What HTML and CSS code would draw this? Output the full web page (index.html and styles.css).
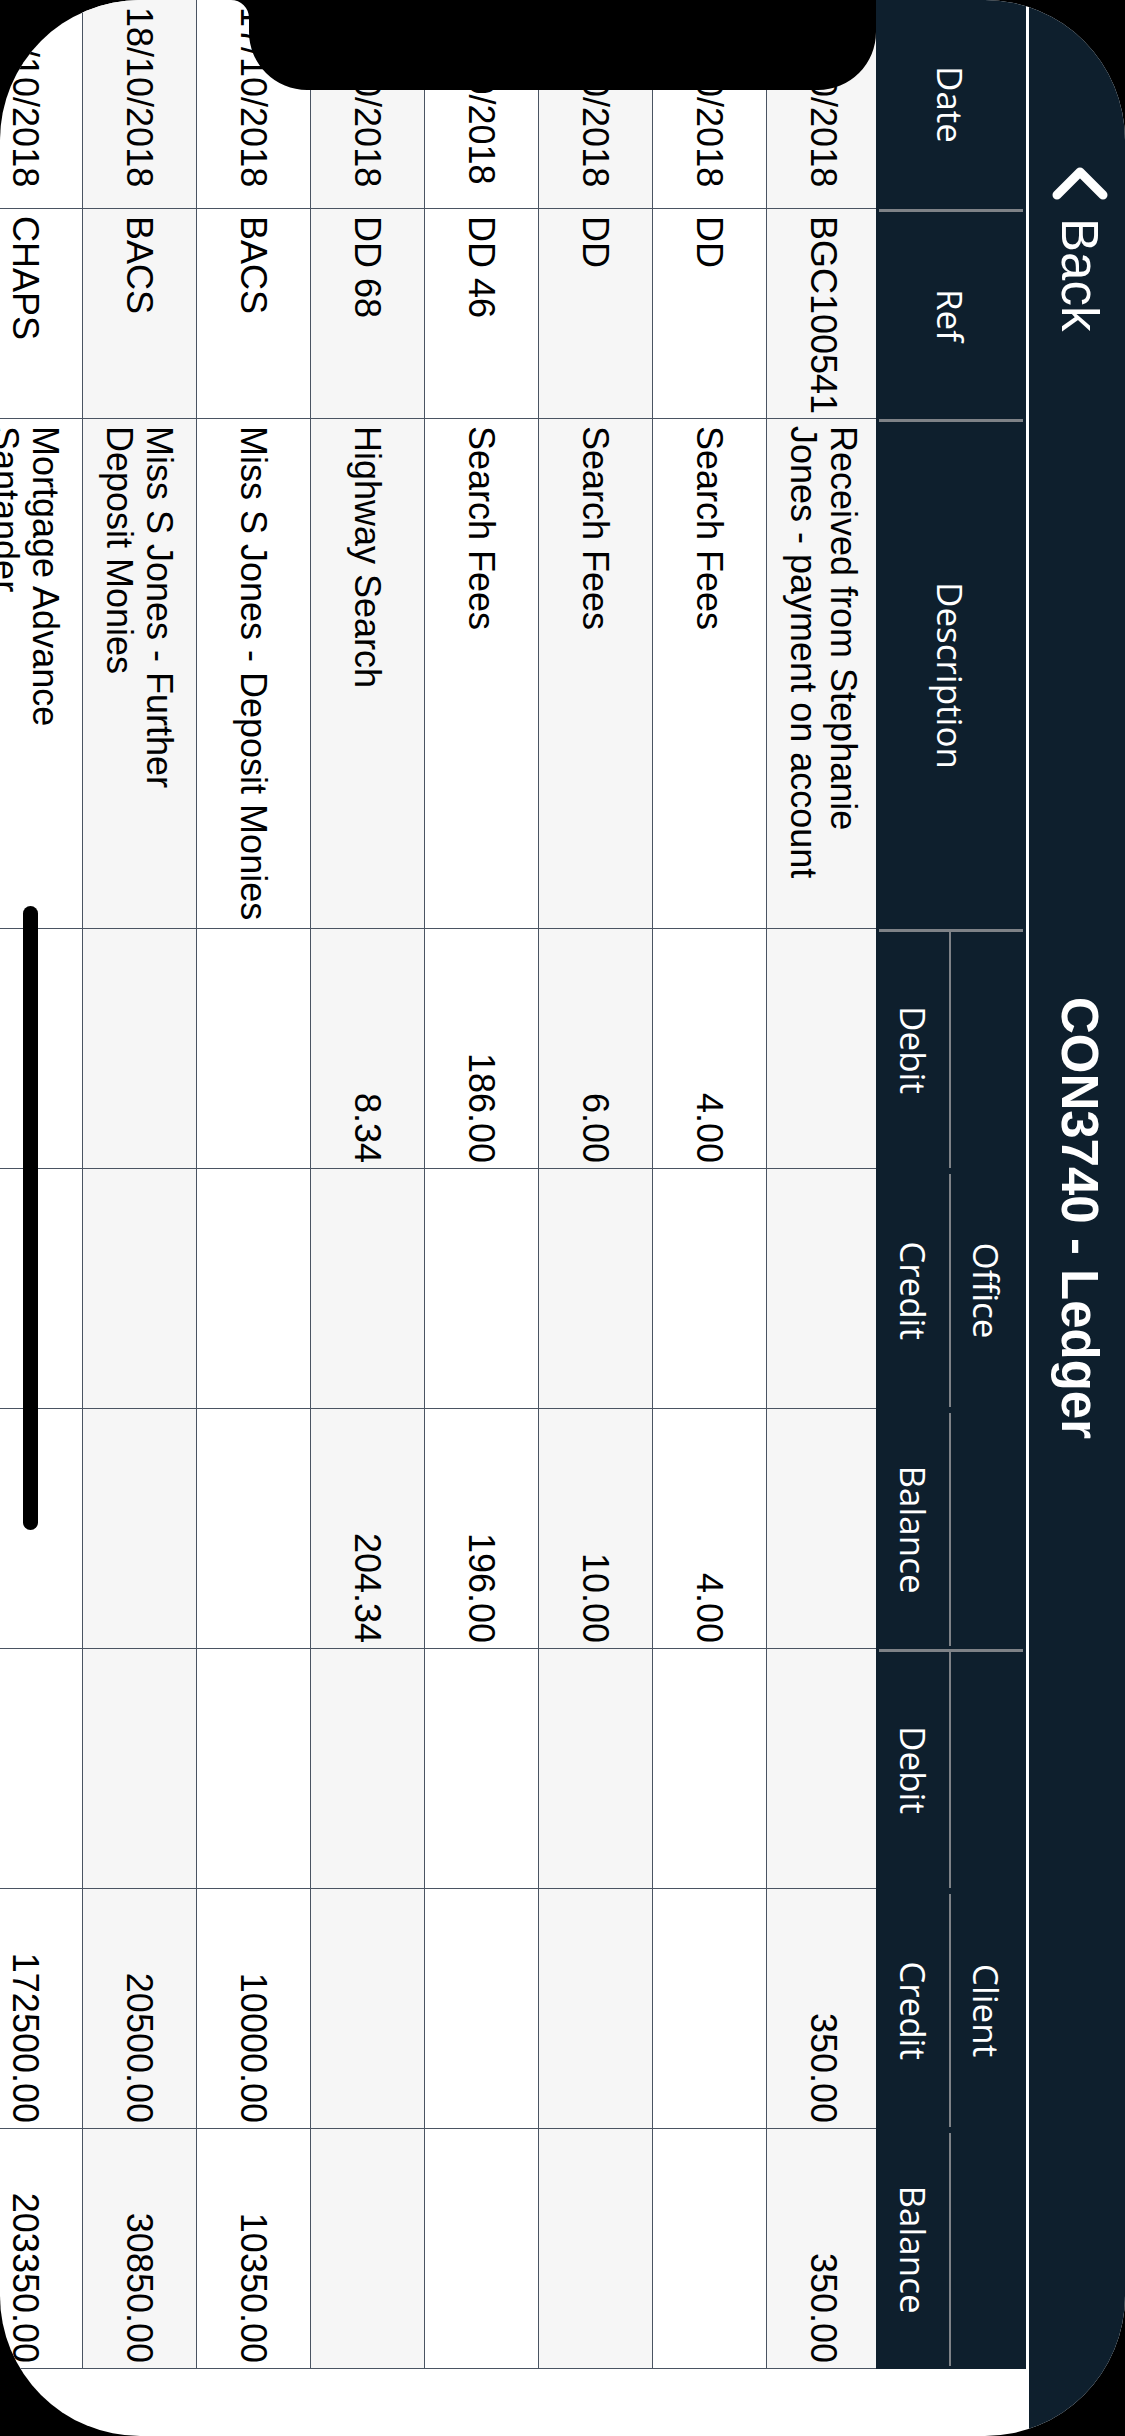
FILE: index.html
```html
<!DOCTYPE html>
<html lang="en">
<head>
    <meta charset="UTF-8">
    <meta name="viewport" content="width=device-width, initial-scale=1.0">
    <title>CON3740 - Ledger</title>
    <link rel="stylesheet" href="styles.css">
</head>
<body>
    <div class="screen">
        <div class="navbar">
            <a class="back" href="#">
                <svg width="34" height="56" viewBox="0 0 34 56"><path d="M29 5 L6 28 L29 51"/></svg>
                <span>Back</span>
            </a>
            <h1 class="title">CON3740 - Ledger</h1>
        </div>

        <div class="ledger">
            <div class="head">
                <div class="hcell">Date</div>
                <div class="hcell">Ref</div>
                <div class="hcell">Description</div>
                <div class="hgroup">
                    <div class="gtitle">Office</div>
                    <div class="gsub">
                        <span>Debit</span>
                        <span>Credit</span>
                        <span>Balance</span>
                    </div>
                </div>
                <div class="hgroup">
                    <div class="gtitle">Client</div>
                    <div class="gsub">
                        <span>Debit</span>
                        <span>Credit</span>
                        <span>Balance</span>
                    </div>
                </div>
            </div>

            <div class="rows">
                <div class="row">
                    <div class="cell">09/10/2018</div>
                    <div class="cell">BGC100541</div>
                    <div class="cell"><span>Received from Stephanie Jones - payment on account</span></div>
                    <div class="cell num"></div>
                    <div class="cell num"></div>
                    <div class="cell num"></div>
                    <div class="cell num"></div>
                    <div class="cell num">350.00</div>
                    <div class="cell num">350.00</div>
                </div>
                <div class="row">
                    <div class="cell">10/10/2018</div>
                    <div class="cell">DD</div>
                    <div class="cell"><span>Search Fees</span></div>
                    <div class="cell num">4.00</div>
                    <div class="cell num"></div>
                    <div class="cell num">4.00</div>
                    <div class="cell num"></div>
                    <div class="cell num"></div>
                    <div class="cell num"></div>
                </div>
                <div class="row">
                    <div class="cell">10/10/2018</div>
                    <div class="cell">DD</div>
                    <div class="cell"><span>Search Fees</span></div>
                    <div class="cell num">6.00</div>
                    <div class="cell num"></div>
                    <div class="cell num">10.00</div>
                    <div class="cell num"></div>
                    <div class="cell num"></div>
                    <div class="cell num"></div>
                </div>
                <div class="row">
                    <div class="cell">11/10/2018</div>
                    <div class="cell">DD 46</div>
                    <div class="cell"><span>Search Fees</span></div>
                    <div class="cell num">186.00</div>
                    <div class="cell num"></div>
                    <div class="cell num">196.00</div>
                    <div class="cell num"></div>
                    <div class="cell num"></div>
                    <div class="cell num"></div>
                </div>
                <div class="row">
                    <div class="cell">12/10/2018</div>
                    <div class="cell">DD 68</div>
                    <div class="cell"><span>Highway Search</span></div>
                    <div class="cell num">8.34</div>
                    <div class="cell num"></div>
                    <div class="cell num">204.34</div>
                    <div class="cell num"></div>
                    <div class="cell num"></div>
                    <div class="cell num"></div>
                </div>
                <div class="row">
                    <div class="cell">17/10/2018</div>
                    <div class="cell">BACS</div>
                    <div class="cell"><span>Miss S Jones - Deposit Monies</span></div>
                    <div class="cell num"></div>
                    <div class="cell num"></div>
                    <div class="cell num"></div>
                    <div class="cell num"></div>
                    <div class="cell num">10000.00</div>
                    <div class="cell num">10350.00</div>
                </div>
                <div class="row">
                    <div class="cell">18/10/2018</div>
                    <div class="cell">BACS</div>
                    <div class="cell"><span>Miss S Jones - Further<br>Deposit Monies</span></div>
                    <div class="cell num"></div>
                    <div class="cell num"></div>
                    <div class="cell num"></div>
                    <div class="cell num"></div>
                    <div class="cell num">20500.00</div>
                    <div class="cell num">30850.00</div>
                </div>
                <div class="row">
                    <div class="cell">19/10/2018</div>
                    <div class="cell">CHAPS</div>
                    <div class="cell"><span>Mortgage Advance<br>Santander</span></div>
                    <div class="cell num"></div>
                    <div class="cell num"></div>
                    <div class="cell num"></div>
                    <div class="cell num"></div>
                    <div class="cell num">172500.00</div>
                    <div class="cell num">203350.00</div>
                </div>
            </div>
        </div>

        <!-- sensor housing + home indicator drawn over the content -->
        <svg class="notch" width="92" height="663" viewBox="0 0 92 663">
            <path d="M0 0 A18 18 0 0 0 18 18 L32 18 A58 58 0 0 1 90 76 L90 587 A58 58 0 0 1 32 645 L18 645 A18 18 0 0 0 0 663 Z"/>
        </svg>
        <div class="home-bar"></div>
    </div>
</body>
</html>
```

FILE: styles.css
```css
*{
    margin: 0;
    padding: 0;
    box-sizing: border-box;
}
html,body{
    width: 1125px;
    height: 2436px;
    overflow: hidden;
    background: #000;
}
/* app is in landscape, the phone is held sideways */
.screen{
    --navy: #0e1f2d;
    --cols: 209px 210px 510px 240px 240px 240px 240px 240px 240px;
    position: relative;
    width: 2436px;
    height: 1125px;
    overflow: hidden;
    border-radius: 140px;
    background: #fff;
    transform-origin: 0 0;
    transform: translateX(1125px) rotate(90deg);
}

/* top bar */
.navbar{
    display: grid;
    grid-template-columns: 1fr auto 1fr;
    align-items: center;
    height: 96px;
    padding-bottom: 6px;
    background: var(--navy);
    color: #fff;
    font-family: "Liberation Sans", Arial, sans-serif;
}
.back{
    display: flex;
    align-items: center;
    gap: 18px;
    padding-left: 166px;
    color: #fff;
    text-decoration: none;
    font-size: 51px;
}
.back svg path{
    fill: none;
    stroke: #fff;
    stroke-width: 9;
    stroke-linecap: round;
    stroke-linejoin: round;
}
.title{
    font-size: 51px;
    font-weight: bold;
}

/* ledger table */
.ledger{
    width: 2369px;
    margin-top: 3px;
}
.head{
    position: relative;
    z-index: 1;
    display: grid;
    grid-template-columns: 209px 210px 510px 720px 720px;
    height: 150px;
    padding: 3px 0;
    background: var(--navy);
    color: #fff;
    font-family: "Open Sans", "Noto Sans", sans-serif;
    font-size: 35px;
}
.hcell{
    display: flex;
    align-items: center;
    justify-content: center;
}
.head > div + div{
    border-left: 3px solid #7e8287;
}
.hgroup{
    display: flex;
    flex-direction: column;
}
.gtitle{
    display: flex;
    align-items: center;
    justify-content: center;
    height: 72px;
}
.gsub{
    flex: 1;
    display: grid;
    grid-template-columns: 1fr 1fr 1fr;
}
.gsub span{
    display: flex;
    align-items: center;
    justify-content: center;
    margin: 0 3px;
    border-top: 2px solid #7e8287;
}
.gsub span:first-child{
    margin-left: 0;
}

.rows{
    margin-top: -4px;
    font-family: "Liberation Sans", Arial, sans-serif;
    font-size: 36px;
    color: #000;
}
.row{
    display: grid;
    grid-template-columns: var(--cols);
    height: 114px;
    border-bottom: 1px solid #4a5462;
}
.row:nth-child(odd){
    background: #f6f6f6;
}
.cell{
    display: flex;
    align-items: center;
    min-width: 0;
    padding: 0 5px 0 7px;
    border-right: 1px solid #4a5462;
    line-height: 40px;
    white-space: nowrap;
}
.cell span{
    white-space: normal;
}
.num{
    justify-content: flex-end;
}

.notch{
    position: absolute;
    left: 0;
    top: 231px;
    fill: #000;
}
.home-bar{
    position: absolute;
    left: calc(50% - 312px);
    bottom: 23px;
    width: 624px;
    height: 15px;
    border-radius: 8px;
    background: #000;
}
```
